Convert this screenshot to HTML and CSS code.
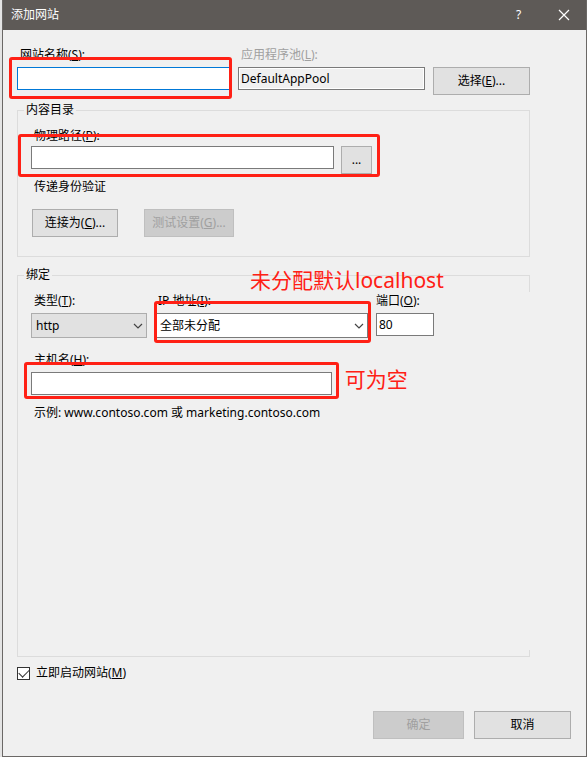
FILE: index.html
```html
<!DOCTYPE html>
<html lang="zh-CN">
<head>
<meta charset="utf-8">
<meta name="viewport" content="width=device-width, initial-scale=1">
<title>添加网站</title>
<link rel="stylesheet" href="styles.css">
</head>
<body>
<form class="dialog">
  <header class="titlebar">
    <h1 class="title">添加网站</h1>
    <button type="button" class="caption-btn">?</button>
    <button type="button" class="caption-btn" aria-label="关闭">
      <svg width="12" height="12" viewBox="0 0 12 12"><path d="M1 1 L11 11 M11 1 L1 11" fill="none" stroke="#fff" stroke-width="1.2"/></svg>
    </button>
  </header>

  <main class="content">
    <div class="site-row">
      <div class="field">
        <label class="label" for="name">网站名称(<u>S</u>):</label>
        <div class="control marked mark-name"><input class="text focused" id="name" type="text"></div>
      </div>
      <div class="field">
        <label class="label muted" for="pool">应用程序池(<u>L</u>):</label>
        <input class="text readonly" id="pool" type="text" value="DefaultAppPool" readonly>
      </div>
      <button type="button" class="btn">选择(<u>E</u>)...</button>
    </div>

    <fieldset class="group">
      <legend>内容目录</legend>
      <label class="label" for="path">物理路径(<u>P</u>):</label>
      <div class="path-row marked mark-path">
        <input class="text" id="path" type="text">
        <button type="button" class="btn">...</button>
      </div>
      <p class="label">传递身份验证</p>
      <div class="auth-row">
        <button type="button" class="btn">连接为(<u>C</u>)...</button>
        <button type="button" class="btn" disabled>测试设置(<u>G</u>)...</button>
      </div>
    </fieldset>

    <div class="binding">
      <fieldset class="group">
        <legend>绑定</legend>
        <div class="binding-row">
          <div class="field">
            <label class="label" for="type">类型(<u>T</u>):</label>
            <div class="control">
              <select class="select grey" id="type"><option>http</option></select>
              <svg class="chevron" width="10" height="6" viewBox="0 0 10 6"><path d="M1 1 L5 5 L9 1" fill="none" stroke="#444" stroke-width="1.2"/></svg>
            </div>
          </div>
          <div class="field">
            <label class="label" for="ip">IP 地址(<u>I</u>):</label>
            <div class="control marked mark-ip">
              <select class="select" id="ip"><option>全部未分配</option></select>
              <svg class="chevron" width="10" height="6" viewBox="0 0 10 6"><path d="M1 1 L5 5 L9 1" fill="none" stroke="#444" stroke-width="1.2"/></svg>
              <span class="note note-ip">未分配默认localhost</span>
            </div>
          </div>
          <div class="field port">
            <label class="label" for="port">端口(<u>O</u>):</label>
            <input class="text" id="port" type="text" value="80">
          </div>
        </div>
        <label class="label" for="host">主机名(<u>H</u>):</label>
        <div class="host-row marked mark-host">
          <input class="text" id="host" type="text">
          <span class="note note-host">可为空</span>
        </div>
        <p class="label">示例: www.contoso.com 或 marketing.contoso.com</p>
      </fieldset>
    </div>

    <label class="check"><input type="checkbox" checked><span>立即启动网站(<u>M</u>)</span></label>
  </main>

  <footer class="actions">
    <button type="button" class="btn" disabled>确定</button>
    <button type="button" class="btn">取消</button>
  </footer>
</form>
</body>
</html>
```

FILE: styles.css
```css
* {
  box-sizing: border-box;
}

body {
  margin: 0;
  padding-left: 2px;
  background: #e4e4e4;
}

body,
button,
input,
select {
  font: 12px/16px "Noto Sans", "Noto Sans CJK SC", sans-serif;
  color: #000;
}

.dialog {
  display: flex;
  flex-direction: column;
  min-height: 100vh;
  border: 1px solid #6b6866;
  border-top: 0;
  background: #f0f0f0;
}

.titlebar {
  display: flex;
  align-items: center;
  height: 30px;
  padding-left: 8px;
  background: #5e5a57;
}

.title {
  flex: 1;
  margin: 0;
  font-size: 12px;
  font-weight: 400;
  color: #fff;
}

.caption-btn {
  display: grid;
  place-items: center;
  width: 45px;
  height: 28px;
  padding: 0;
  border: 0;
  background: none;
  color: #fff;
}

.content {
  flex: 1;
  display: flex;
  flex-direction: column;
  padding: 17px 56px 0 14px;
}

.site-row {
  display: grid;
  grid-template-columns: 212fr 186fr 97px;
  column-gap: 8px;
  align-items: start;
  margin-bottom: 7px;
}

.site-row .btn {
  margin-top: 20px;
}

.label {
  display: block;
  margin: 0;
  padding-left: 3px;
}

.field {
  min-width: 0;
}

.field > .label {
  margin-bottom: 4px;
}

.muted {
  color: #a0a0a0;
}

.text {
  display: block;
  width: 100%;
  height: 23px;
  padding: 0 2px;
  border: 1px solid #7a7a7a;
  border-radius: 0;
  background: #fff;
  outline: 0;
}

.focused {
  border-color: #0078d7;
}

.readonly {
  background: #f0f0f0;
  box-shadow: inset 0 0 0 1px #fff;
}

.btn {
  height: 28px;
  padding: 0;
  border: 1px solid #adadad;
  background: #e1e1e1;
}

.btn:disabled {
  border-color: #bfbfbf;
  background: #ccc;
  color: #a0a0a0;
}

.group {
  min-width: 0;
  margin: 0 0 10px;
  padding: 10px 13px 19px;
  border: 1px solid #dcdcdc;
}

.group legend {
  margin-left: -7px;
  padding: 0 2px;
}

.path-row {
  display: grid;
  grid-template-columns: 303fr 31px 137fr;
  column-gap: 7px;
  align-items: start;
  margin: 2px 0 5px;
}

.auth-row {
  display: flex;
  gap: 26px;
  margin: 14px 0 0 1px;
}

.auth-row .btn {
  width: 86px;
}

.auth-row .btn:disabled {
  width: 90px;
}

.binding {
  position: relative;
  display: grid;
  flex: 1;
  margin-bottom: 8px;
}

.binding .group {
  margin: 0;
}

.binding::after {
  content: "";
  position: absolute;
  top: 25px;
  right: 0;
  bottom: 7px;
  width: 1px;
  background: #f0f0f0;
}

.binding-row {
  display: grid;
  grid-template-columns: 116fr 213fr 58fr 74fr;
  column-gap: 8px;
  margin-bottom: 14px;
}

.port .label {
  padding-left: 0;
}

.select {
  display: block;
  width: 100%;
  height: 25px;
  padding: 0 20px 0 4px;
  border: 1px solid #7a7a7a;
  border-radius: 0;
  background: #fff;
  appearance: none;
}

.grey {
  border-color: #adadad;
  background: #e1e1e1;
}

.control {
  position: relative;
}

.chevron {
  position: absolute;
  top: 10px;
  right: 4px;
  pointer-events: none;
}

.host-row {
  width: 62%;
  margin: 4px 0 10px;
}

/* Red highlight frames drawn over the fields. */
.marked {
  position: relative;
}

.marked::after {
  content: "";
  position: absolute;
  border: 3px solid #ff2015;
  border-radius: 3px;
  pointer-events: none;
}

.mark-name::after {
  inset: -10px -2px -9px -8px;
}

.mark-path::after {
  inset: -12px 28% -3px -13px;
}

.mark-ip::after {
  inset: -12px -3px -5px -1px;
}

.mark-host::after {
  inset: -10px -7px -4px -7px;
}

.note {
  position: absolute;
  font-size: 21px;
  line-height: 22px;
  white-space: nowrap;
  color: #ff2015;
}

.note-ip {
  bottom: 47px;
  left: 95px;
}

.note-host {
  top: -4px;
  left: 100%;
  margin-left: 13px;
}

.check {
  display: flex;
  align-items: center;
  gap: 6px;
  align-self: flex-start;
}

.check input {
  width: 13px;
  height: 13px;
  margin: 0;
  border: 1px solid #333;
  background: #fff;
  appearance: none;
}

.check input:checked {
  display: grid;
  place-items: center;
}

.check input:checked::before {
  content: "";
  width: 9px;
  height: 5px;
  margin-bottom: 3px;
  border: solid #333;
  border-width: 0 0 1px 1px;
  transform: rotate(-45deg);
}

.actions {
  display: flex;
  justify-content: flex-end;
  gap: 10px;
  padding: 30px 15px 17px;
}

.actions .btn {
  width: 97px;
}

.actions .btn:disabled {
  width: 91px;
}
```
